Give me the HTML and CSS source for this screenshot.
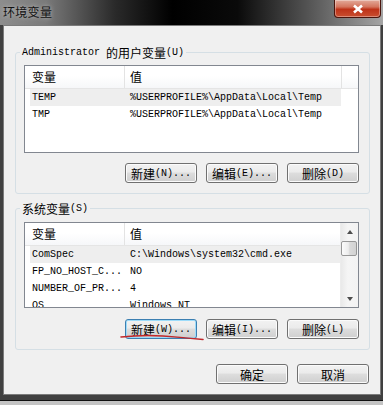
FILE: index.html
```html
<!DOCTYPE html>
<html lang="zh-CN">
<head>
    <link rel="stylesheet" href="styles.css">
    <meta charset="UTF-8">
    <meta name="viewport" content="width=device-width, initial-scale=1.0">
    <title>环境变量</title>
</head>
<body>
    <div class="window">
        <div class="titlebar">
            <span class="title">环境变量</span>
            <div class="close">
                <svg width="14" height="10" viewBox="0 0 14 10"><path d="M3 1.5 L11 8.5 M11 1.5 L3 8.5" stroke="#fff" stroke-width="2.6" fill="none"/></svg>
            </div>
        </div>

        <div class="client">
            <div class="group">
                <div class="legend"><span class="en">Administrator </span><span>的用户变量</span><span class="en">(U)</span></div>

                <div class="list list-user">
                    <div class="list-head">
                        <div class="hd hd-name">变量</div>
                        <div class="hd hd-val">值</div>
                        <div class="hd hd-rest"></div>
                    </div>
                    <div class="row sel"><div class="c-name">TEMP</div><div class="c-val">%USERPROFILE%\AppData\Local\Temp</div></div>
                    <div class="row"><div class="c-name">TMP</div><div class="c-val">%USERPROFILE%\AppData\Local\Temp</div></div>
                </div>

                <div class="btn-row">
                    <button class="btn"><span>新建</span><span class="en">(N)...</span></button>
                    <button class="btn"><span>编辑</span><span class="en">(E)...</span></button>
                    <button class="btn"><span>删除</span><span class="en">(D)</span></button>
                </div>
            </div>

            <div class="group">
                <div class="legend"><span>系统变量</span><span class="en">(S)</span></div>

                <div class="list list-sys">
                    <div class="list-main">
                        <div class="list-head">
                            <div class="hd hd-name">变量</div>
                            <div class="hd hd-val">值</div>
                        </div>
                        <div class="row sel"><div class="c-name">ComSpec</div><div class="c-val">C:\Windows\system32\cmd.exe</div></div>
                        <div class="row"><div class="c-name">FP_NO_HOST_C...</div><div class="c-val">NO</div></div>
                        <div class="row"><div class="c-name">NUMBER_OF_PR...</div><div class="c-val">4</div></div>
                        <div class="row"><div class="c-name">OS</div><div class="c-val">Windows_NT</div></div>
                    </div>
                    <div class="scrollbar">
                        <div class="sb-btn"><span class="arrow-up"></span></div>
                        <div class="sb-thumb"></div>
                        <div class="sb-track"></div>
                        <div class="sb-btn"><span class="arrow-down"></span></div>
                    </div>
                </div>

                <div class="btn-row sys-btns">
                    <button class="btn focus"><span>新建</span><span class="en">(W)...</span></button>
                    <button class="btn"><span>编辑</span><span class="en">(I)...</span></button>
                    <button class="btn"><span>删除</span><span class="en">(L)</span></button>
                </div>
            </div>

            <div class="dlg-btns">
                <button class="btn">确定</button>
                <button class="btn">取消</button>
            </div>
        </div>

        <!-- red hand-drawn mark under the button -->
        <svg class="mark" width="90" height="10" viewBox="0 0 90 10"><path d="M3 4 Q 25 1.5 45 3 T 85 6.5" stroke="#c0282b" stroke-width="1.6" fill="none" stroke-linecap="round"/></svg>
    </div>
</body>
</html>
```

FILE: styles.css
```css
body {
    margin: 0;
    background-color: #c4c4c4;
    font-family: "Noto Sans CJK SC", sans-serif;
    font-size: 12px;
    color: #000;
}

.window {
    position: relative;
    width: 383px;
    height: 400px;
    background-color: #404040;
    border-bottom: 1px solid #111;
    display: flex;
    flex-direction: column;
}

.titlebar {
    height: 25px;
    display: flex;
    justify-content: space-between;
    align-items: flex-start;
    background: linear-gradient(90deg, #8d8d8d 0%, #7a7a7a 12%, #2a2a2a 30%, #000 45%, #0a0a0a 62%, #5a5a5a 82%, #a5a5a5 100%);
}

.title {
    line-height: 24px;
    padding-left: 3px;
    color: #111;
    text-shadow: 0 0 4px #c8c8c8;
    letter-spacing: 0.3px;
}

.close {
    width: 45px;
    height: 17px;
    margin-right: 2px;
    border: 1px solid #4a140c;
    border-top: 0;
    border-radius: 0 0 4px 4px;
    background: linear-gradient(#e3aa9a, #d4755e 40%, #be3218 55%, #c94f30);
    box-shadow: inset 0 0 0 1px rgba(255, 255, 255, 0.35);
    display: flex;
    align-items: center;
    justify-content: center;
}

.client {
    margin: 0 2px 0 3px;
    height: 370px;
    box-sizing: border-box;
    border: 1px solid #7b7b7b;
    background-color: #f0f0f0;
    display: flex;
    flex-direction: column;
}

.group {
    margin: 26px 10px 0 11px;
    border: 1px solid #d5dfe5;
    border-radius: 3px;
    padding: 0 10px 10px 8px;
}

.group + .group {
    margin-top: 14px;
}

.legend {
    display: flex;
    align-items: center;
    width: fit-content;
    height: 14px;
    margin: -8px 0 0 -4px;
    padding: 0 2px;
    background-color: #f0f0f0;
}

.en {
    font-family: "Liberation Mono", monospace;
    font-size: 10px;
    white-space: pre;
}

.list {
    border: 1px solid #828790;
    background-color: #fff;
    box-sizing: border-box;
    margin-top: 6px;
    overflow: hidden;
}

.list-user {
    height: 88px;
}

.list-sys {
    height: 86px;
    margin-top: 7px;
    display: flex;
}

.list-main {
    flex: 1;
    overflow: hidden;
}

.list-head {
    display: flex;
    height: 23px;
    box-sizing: border-box;
    border-bottom: 1px solid #e5e5e5;
    background: linear-gradient(#fff 0%, #fff 45%, #f6f7f9 100%);
}

.hd {
    box-sizing: border-box;
    border-right: 1px solid #e3e3e3;
    line-height: 22px;
    flex-shrink: 0;
}

.hd-name {
    width: 100px;
    padding-left: 7px;
}

.hd-val {
    width: 217px;
    padding-left: 5px;
}

.hd-rest {
    flex: 1;
    border-right: none;
}

.row {
    display: flex;
    height: 17px;
    width: 311px;
    margin-left: 5px;
    font-family: "Liberation Mono", monospace;
    font-size: 10px;
    line-height: 17px;
    white-space: pre;
}

.row.sel {
    background-color: #eeeeee;
}

.c-name {
    width: 95px;
    box-sizing: border-box;
    padding-left: 2px;
    flex-shrink: 0;
}

.c-val {
    padding-left: 5px;
}

.scrollbar {
    width: 17px;
    display: flex;
    flex-direction: column;
    background: linear-gradient(90deg, #e9e9e9, #f5f5f5 40%, #f3f3f3);
    border-left: 1px solid #ececec;
}

.sb-btn {
    height: 17px;
    display: flex;
    align-items: center;
    justify-content: center;
}

.arrow-up {
    border-left: 3.5px solid transparent;
    border-right: 3.5px solid transparent;
    border-bottom: 4px solid #4d4d4d;
}

.arrow-down {
    border-left: 3.5px solid transparent;
    border-right: 3.5px solid transparent;
    border-top: 4px solid #4d4d4d;
}

.sb-thumb {
    height: 15px;
    margin: 1px 1px 0 0;
    border: 1px solid #979797;
    border-radius: 2px;
    box-sizing: border-box;
    background: linear-gradient(90deg, #fbfbfb, #ececec 45%, #dadada 55%, #d2d2d2);
}

.sb-track {
    flex: 1;
}

.btn-row {
    display: flex;
    justify-content: flex-end;
    gap: 9px;
    margin-top: 10px;
}

.sys-btns {
    margin-top: 11px;
}

.btn {
    width: 72px;
    height: 20px;
    box-sizing: border-box;
    padding: 0;
    border: 1px solid #707070;
    border-radius: 3px;
    background: linear-gradient(#f2f2f2 0%, #ebebeb 45%, #dddddd 50%, #cfcfcf 100%);
    box-shadow: inset 0 0 0 1px #fbfbfb;
    display: flex;
    align-items: center;
    justify-content: center;
    font-family: "Noto Sans CJK SC", sans-serif;
    font-size: 12px;
    color: #000;
}

.btn.focus {
    border-color: #3c7fb1;
    box-shadow: inset 0 0 0 1px #9ddcfa;
}

.dlg-btns {
    display: flex;
    justify-content: flex-end;
    gap: 9px;
    margin: 14px 11px 0 0;
}

.mark {
    position: absolute;
    left: 118px;
    top: 333px;
}
```
